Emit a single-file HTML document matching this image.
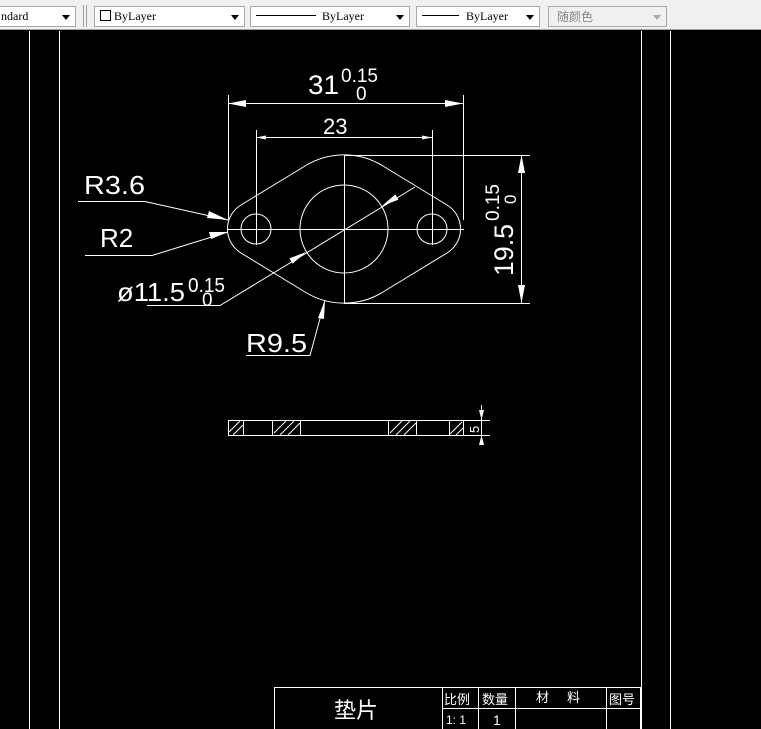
<!DOCTYPE html>
<html><head><meta charset="utf-8"><style>
html,body{margin:0;padding:0;width:761px;height:729px;overflow:hidden;background:#000;}
.tb{position:absolute;left:0;top:0;width:761px;height:30px;background:#f0f0f0;border-bottom:1px solid #a0a0a0;box-sizing:border-box;}
.cb{position:absolute;top:6px;height:21px;background:#fff;border:1px solid #a9a9a9;box-sizing:border-box;font-family:"Liberation Serif","Noto Serif CJK SC",serif;font-size:12px;line-height:19px;color:#000;}
.cb .ar{position:absolute;right:5px;top:8px;width:0;height:0;border-left:4px solid transparent;border-right:4px solid transparent;border-top:5px solid #000;}
.sep{position:absolute;top:5px;width:1px;height:22px;background:#a0a0a0;}
svg{position:absolute;left:0;top:0;}
</style></head><body>
<div class="tb">
 <div class="cb" style="left:-2px;width:78px;"><span style="padding-left:2px">ndard</span><div class="ar"></div></div>
 <div class="sep" style="left:83px"></div><div class="sep" style="left:86px"></div>
 <div class="cb" style="left:94px;width:151px;"><span style="display:inline-block;width:9px;height:9px;border:1px solid #000;margin:0 3px 0 5px;vertical-align:-1px"></span>ByLayer<div class="ar"></div></div>
 <div class="cb" style="left:250px;width:160px;"><span style="display:inline-block;width:60px;height:1px;background:#000;margin:0 6px 0 5px;vertical-align:4px"></span>ByLayer<div class="ar"></div></div>
 <div class="cb" style="left:416px;width:124px;"><span style="display:inline-block;width:37px;height:1px;background:#000;margin:0 7px 0 5px;vertical-align:4px"></span>ByLayer<div class="ar"></div></div>
 <div class="cb" style="left:548px;width:119px;background:#f0f0f0;color:#888;font-family:'Noto Sans CJK SC',sans-serif;"><span style="padding-left:8px">随颜色</span><div class="ar" style="border-top-color:#aaa"></div></div>
</div>
<svg width="761" height="729" viewBox="0 0 761 729" xmlns="http://www.w3.org/2000/svg">
<g stroke="#fff" stroke-width="1" fill="none">
 <line x1="29.5" y1="31" x2="29.5" y2="729"/><line x1="59.5" y1="31" x2="59.5" y2="729"/>
 <line x1="641.5" y1="31" x2="641.5" y2="729"/><line x1="670.5" y1="31" x2="670.5" y2="729"/>
 <path d="M305,166 A74,74 0 0 1 383,166 L447,205 A28,28 0 0 1 447,253 L383,292 A74,74 0 0 1 305,292 L241,253 A28,28 0 0 1 241,205 Z"/>
 <circle cx="344" cy="229" r="44"/><circle cx="256" cy="229" r="15"/><circle cx="432" cy="229" r="15"/>
 <line x1="228" y1="229.5" x2="464" y2="229.5"/><line x1="344.5" y1="155" x2="344.5" y2="303"/>
 <line x1="256.5" y1="130" x2="256.5" y2="245"/><line x1="432.5" y1="130" x2="432.5" y2="245"/>
 <line x1="228.5" y1="95" x2="228.5" y2="220"/><line x1="463.5" y1="95" x2="463.5" y2="220"/>
 <line x1="228" y1="103.5" x2="463" y2="103.5"/><line x1="256" y1="137.5" x2="432" y2="137.5"/>
 <line x1="344" y1="155.5" x2="530" y2="155.5"/><line x1="344" y1="303.5" x2="530" y2="303.5"/>
 <line x1="521.5" y1="155" x2="521.5" y2="303"/>
 <polyline points="78,201.5 145,201.5 228,220"/>
 <polyline points="85,255.5 152,255.5 228,232"/>
 <polyline points="147,305.5 220,305.5 415,187"/>
 <polyline points="246,355.5 310,355.5 325,300"/>
 <rect x="228.5" y="420.5" width="235" height="15"/>
 <line x1="243.5" y1="420" x2="243.5" y2="435"/><line x1="272.5" y1="420" x2="272.5" y2="435"/>
 <line x1="300.5" y1="420" x2="300.5" y2="435"/><line x1="388.5" y1="420" x2="388.5" y2="435"/>
 <line x1="416.5" y1="420" x2="416.5" y2="435"/><line x1="449.5" y1="420" x2="449.5" y2="435"/>
 <path d="M229,432 L240,421 M233,435 L243,425 M274,433 L286,421 M280,435 L294,421 M288,435 L300,423 M390,433 L402,421 M396,435 L410,421 M404,435 L416,423 M450,434 L462,422 M456,435 L463,428"/>
 <line x1="464" y1="420.5" x2="490" y2="420.5"/><line x1="464" y1="435.5" x2="490" y2="435.5"/>
 <line x1="481.5" y1="405" x2="481.5" y2="445"/>
 <rect x="274.5" y="687.5" width="366" height="50"/>
 <line x1="442.5" y1="687" x2="442.5" y2="729"/><line x1="478.5" y1="687" x2="478.5" y2="729"/>
 <line x1="515.5" y1="687" x2="515.5" y2="729"/><line x1="606.5" y1="687" x2="606.5" y2="729"/>
 <line x1="442" y1="708.5" x2="640" y2="708.5"/>
</g>
<g fill="#fff">
 <polygon points="228,103.5 246,100 246,107"/><polygon points="463,103.5 445,100 445,107"/>
 <polygon points="256,137.5 266,135.5 266,139.5"/><polygon points="432,137.5 422,135.5 422,139.5"/>
 <polygon points="521.5,155 518,173 525,173"/><polygon points="521.5,303 518,285 525,285"/>
 <polygon points="228,220 209,211 207,218"/><polygon points="228,232 209,232 211,239"/>
 <polygon points="306,252 292.6,263.6 289.5,258.4"/><polygon points="381.6,206.2 398.5,199.6 395.4,194.4"/>
 <polygon points="325,300 318,318 324,319"/>
 <polygon points="481.5,420 479,410 484,410"/><polygon points="481.5,435 479,445 484,445"/>
</g>
<g fill="#fff" font-family="Liberation Sans, sans-serif">
 <text x="308" y="94" font-size="27" textLength="31" lengthAdjust="spacingAndGlyphs">31</text>
 <text x="341" y="82" font-size="19" textLength="37" lengthAdjust="spacingAndGlyphs">0.15</text>
 <text x="356" y="100" font-size="19">0</text>
 <text x="323" y="134" font-size="22">23</text>
 <text x="84" y="194" font-size="26" textLength="61" lengthAdjust="spacingAndGlyphs">R3.6</text>
 <text x="100" y="247" font-size="26">R2</text>
 <text x="117" y="301" font-size="26" textLength="68" lengthAdjust="spacingAndGlyphs">ø11.5</text>
 <text x="188" y="292" font-size="20" textLength="37" lengthAdjust="spacingAndGlyphs">0.15</text>
 <text x="202" y="306" font-size="19">0</text>
 <text x="246" y="352" font-size="26" textLength="61" lengthAdjust="spacingAndGlyphs">R9.5</text>
 <g transform="translate(513,276) rotate(-90)">
  <text x="0" y="0" font-size="27" textLength="52" lengthAdjust="spacingAndGlyphs">19.5</text>
  <text x="55" y="-14" font-size="19" textLength="37" lengthAdjust="spacingAndGlyphs">0.15</text>
  <text x="72" y="3" font-size="17">0</text>
 </g>
 <text x="0" y="0" font-size="13" transform="translate(479,433) rotate(-90)">5</text>
</g>
<g fill="#fff" font-family="Liberation Sans, 'Noto Sans CJK SC', sans-serif">
 <text x="334" y="718" font-size="22">垫片</text>
 <text x="444" y="704" font-size="13">比例</text>
 <text x="482" y="704" font-size="13">数量</text>
 <text x="536" y="702" font-size="13">材</text><text x="567" y="702" font-size="13">料</text>
 <text x="609" y="704" font-size="13">图号</text>
 <text x="446" y="724" font-size="12">1: 1</text>
 <text x="493" y="725" font-size="14">1</text>
</g>
</svg>
</body></html>
